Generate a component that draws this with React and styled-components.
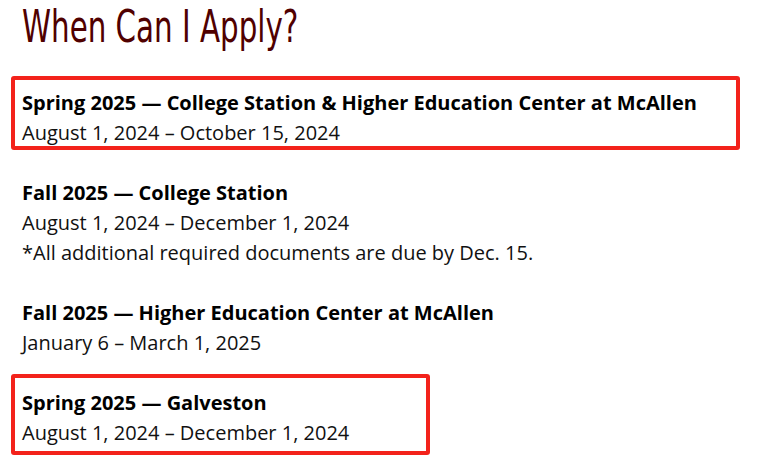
import React from "react";
import styled, { createGlobalStyle } from "styled-components";

const GlobalStyle = createGlobalStyle`
  html, body {
    margin: 0;
    padding: 0;
    background: #ffffff;
  }
  body {
    font-family: "Open Sans", "Liberation Sans", sans-serif;
    color: #000000;
  }
`;

const Page = styled.main`
  width: 764px;
  height: 460px;
  overflow: hidden;
  box-sizing: border-box;
  padding: 0 0 0 22px;
  background: #ffffff;
`;

const Heading = styled.h2`
  margin: 0 0 34px 0;
  font-family: "Liberation Sans Narrow", "DejaVu Sans Condensed", sans-serif;
  font-weight: 400;
  font-size: 45px;
  line-height: 54px;
  color: #500000;
  transform: scaleX(0.725);
  transform-origin: left center;
  white-space: nowrap;
`;

const Schedule = styled.section`
  display: flex;
  flex-direction: column;
  gap: 30px;
`;

const Entry = styled.div`
  position: relative;
  display: flex;
  flex-direction: column;
  font-size: 20px;
  line-height: 30px;

  ${({ $mark }) =>
    $mark
      ? `
    &::after {
      content: "";
      position: absolute;
      left: -11px;
      top: ${-$mark.top}px;
      bottom: ${-$mark.bottom}px;
      width: ${$mark.width}px;
      box-sizing: border-box;
      border: 4px solid #f3221b;
      border-radius: 3px;
      pointer-events: none;
    }
  `
      : ""}
`;

const Title = styled.strong`
  font-weight: 700;
  color: #000000;
`;

const Line = styled.span`
  font-weight: 400;
  color: #111111;
`;

const entries = [
  {
    title: "Spring 2025 \u2014 College Station & Higher Education Center at McAllen",
    lines: ["August 1, 2024 \u2013 October 15, 2024"],
    mark: { top: 12, bottom: 2, width: 729 },
  },
  {
    title: "Fall 2025 \u2014 College Station",
    lines: [
      "August 1, 2024 \u2013 December 1, 2024",
      "*All additional required documents are due by Dec. 15.",
    ],
  },
  {
    title: "Fall 2025 \u2014 Higher Education Center at McAllen",
    lines: ["January 6 \u2013 March 1, 2025"],
  },
  {
    title: "Spring 2025 \u2014 Galveston",
    lines: ["August 1, 2024 \u2013 December 1, 2024"],
    mark: { top: 14, bottom: 7, width: 419 },
  },
];

export default function App() {
  return (
    <>
      <GlobalStyle />
      <Page>
        <Heading>When Can I Apply?</Heading>
        <Schedule>
          {entries.map((e) => (
            <Entry key={e.title} $mark={e.mark}>
              <Title>{e.title}</Title>
              {e.lines.map((l) => (
                <Line key={l}>{l}</Line>
              ))}
            </Entry>
          ))}
        </Schedule>
      </Page>
    </>
  );
}
